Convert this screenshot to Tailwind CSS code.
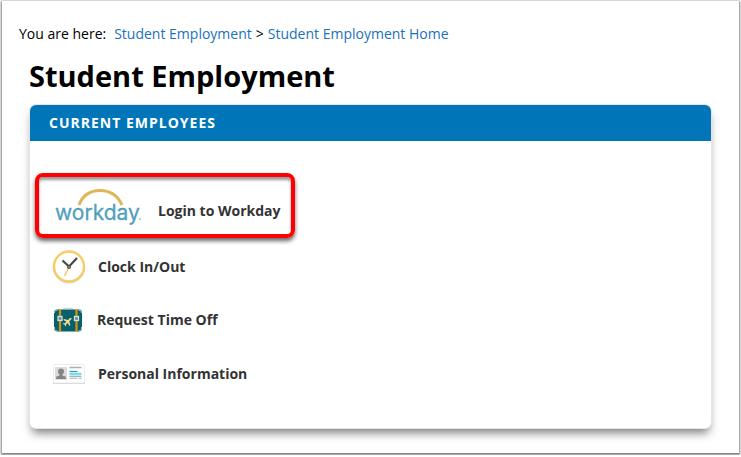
<!DOCTYPE html>
<html lang="en">
<head>
    <meta charset="UTF-8">
    <meta name="viewport" content="width=device-width, initial-scale=1.0">
    <title>Student Employment</title>
    <script src="https://cdn.jsdelivr.net/npm/@tailwindcss/browser@4"></script>
</head>
<body class="bg-white font-['Open_Sans',sans-serif] text-sm text-black">
    <div class="mx-0.5 mt-px mb-0.5 bg-white px-7 pt-[23px] pb-[25px] shadow-[0_1px_2px_1px_rgba(0,0,0,0.5)]">
        <nav class="-ml-[11px] flex h-5 items-center leading-5" aria-label="Breadcrumb">
            <span class="mr-2">You are here:</span>
            <a href="#" class="text-[#1a72b8]">Student Employment</a>
            <span class="mx-1">&gt;</span>
            <a href="#" class="text-[#1a72b8]">Student Employment Home</a>
        </nav>
        <h1 class="mt-3 -ml-px text-[29px] leading-10 font-bold">Student Employment</h1>

        <section class="mt-[9px] rounded-md bg-white shadow-[0_0_0_1px_#e4e5e5,0_7px_10px_-2px_rgba(0,0,0,0.5)]">
            <h2 class="rounded-t-md bg-[#0076b8] px-[19px] py-2 text-sm leading-5 font-bold tracking-[1px] text-white">CURRENT EMPLOYEES</h2>
            <ul class="px-[5px] pt-8 pb-[37px] font-bold text-[#333]">
                <li>
                    <a href="#" class="inline-flex h-[65px] items-center rounded-lg border-4 border-[#fe0000] pt-2.5 pr-2.5 pl-[15px] shadow-[0_3px_4px_rgba(0,0,0,0.6),inset_0_3px_3px_rgba(0,0,0,0.4)]">
                        <!-- workday logo -->
                        <svg class="-mt-2.5 mr-4 h-10 w-[88px]" viewBox="0 0 88 40" aria-hidden="true">
                            <path d="M25 19C30 6 40 4.500 46 4.500S62 6 68 19" fill="none" stroke="#dfb55b" stroke-width="3"/>
                            <text x="1" y="34" font-family="Inter, sans-serif" font-size="21" font-weight="400" fill="#4f9fbd" stroke="#4f9fbd" stroke-width=".3">workday</text>
                            <circle cx="86" cy="33" r="1" fill="#9cc7d6"/>
                        </svg>
                        <span>Login to Workday</span>
                    </a>
                </li>
                <li class="mt-3">
                    <a href="#" class="flex h-[34px] items-center gap-3 pl-[17px]">
                        <!-- clock -->
                        <svg class="h-[34px] w-[34px]" viewBox="0 0 34 34" fill="none" aria-hidden="true">
                            <circle cx="17" cy="17.500" r="16" fill="#d9d9d9"/>
                            <circle cx="17" cy="16.500" r="15" fill="#fff" stroke="#f8cc64" stroke-width="2.400"/>
                            <path d="M17 17l-4.500 9" stroke="#f6c04c" stroke-width="1.200"/>
                            <path d="M10.500 10.500l6.500 6 8-8.500" stroke="#474747" stroke-width="2.200"/>
                            <circle cx="17" cy="17" r="2" fill="#474747"/>
                            <circle cx="17" cy="17" r=".8" fill="#f6c04c"/>
                        </svg>
                        <span>Clock In/Out</span>
                    </a>
                </li>
                <li class="mt-[19px]">
                    <a href="#" class="flex h-[34px] items-center gap-3 pl-[17px]">
                        <!-- suitcase -->
                        <svg class="h-[34px] w-[33px]" viewBox="0 0 33 34" fill="none" aria-hidden="true">
                            <path d="M12 7V5.500h8V7" stroke="#cfd7d8" stroke-width="1.500"/>
                            <rect x="2" y="6.500" width="28" height="22" rx="3" fill="#07616b"/>
                            <path d="M2.500 10V9q0-2 3-2M26.500 7q3 0 3 3M2.500 24v2q0 2 3 2M26.500 28q3 0 3-2v-2" stroke="#b9c6c7" stroke-width="1"/>
                            <path d="M8 6.500V28M24.500 6.500V28" stroke="#d9920f" stroke-width="2.200"/>
                            <rect x="6" y="13.500" width="4" height="4" fill="#5f8f8c" stroke="#d5e0df" stroke-width="1.300"/>
                            <rect x="22.500" y="13.500" width="4" height="4" fill="#5f8f8c" stroke="#d5e0df" stroke-width="1.300"/>
                            <path d="M19.500 15l-1.500 0-2 2-4-1-.7.700 3 2-1.500 1.500-1.500 0-.5.500 1.800 1 1 1.800.5-.5 0-1.500 1.500-1.500 2 3 .7-.7-1-4 2-2z" fill="#f3dc93"/>
                        </svg>
                        <span>Request Time Off</span>
                    </a>
                </li>
                <li class="mt-5">
                    <a href="#" class="flex h-[34px] items-center gap-3 pl-[17px]">
                        <!-- id card -->
                        <svg class="h-[34px] w-[34px]" viewBox="0 0 34 34" fill="none" aria-hidden="true">
                            <rect x="1" y="8" width="32" height="19" rx="1" fill="#ccc"/>
                            <rect x="1.500" y="7.500" width="31" height="18.500" rx="1" fill="#fff" stroke="#ececec"/>
                            <rect x="3" y="10" width="12" height="13" fill="#dcdcdc"/>
                            <path d="M9 11.500c4 0 3.500 4.500 1.500 6v1l3 1q.5.500.5 2.500H4q0-2 .5-2.500l3-1v-1c-2-1.500-2.500-6 1.500-6z" fill="#858585"/>
                            <path d="M17.500 10.500h12M17.500 19.500h12" stroke="#a9b1b4" stroke-width="1.300"/>
                            <path d="M17.500 14.500h8" stroke="#24a6d0" stroke-width="1.300"/>
                            <path d="M17.500 17h12" stroke="#7adcf5" stroke-width="2.500"/>
                            <path d="M17.500 21.500h8M27 21.500h3" stroke="#bfc6c8"/>
                        </svg>
                        <span>Personal Information</span>
                    </a>
                </li>
            </ul>
        </section>
    </div>
</body>
</html>
